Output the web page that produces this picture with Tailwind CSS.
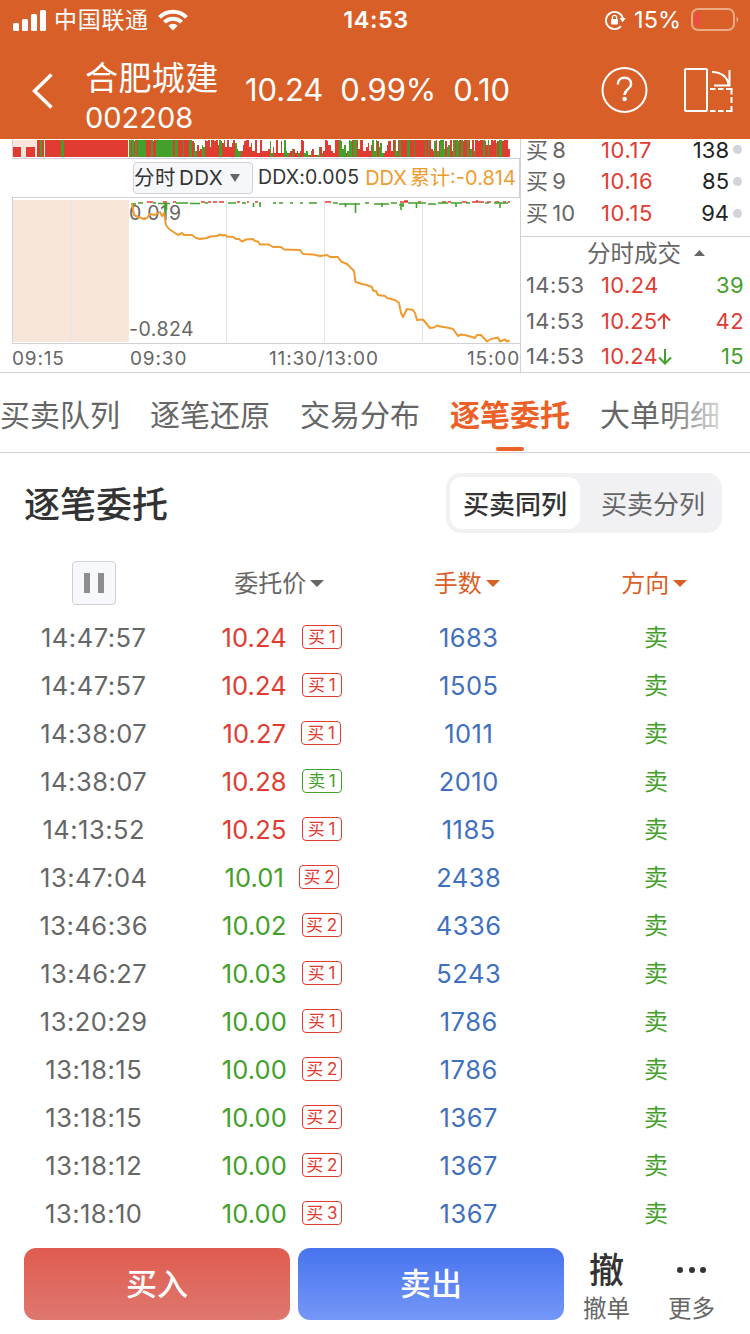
<!DOCTYPE html>
<html lang="zh-CN">
<head>
    <meta charset="UTF-8">
    <meta name="viewport" content="width=device-width, initial-scale=1.0">
    <title>合肥城建 002208 - 逐笔委托</title>
    <script src="https://cdn.jsdelivr.net/npm/@tailwindcss/browser@4"></script>
</head>
<body class="w-[750px] h-[1334px] overflow-hidden bg-white text-[#666] font-['Inter','Noto_Sans_CJK_SC',sans-serif]">

    <!-- Header -->
    <header class="h-[139px] bg-[#d86028] text-white">
        <!-- Status bar -->
        <div class="h-10 grid grid-cols-3 items-center pl-[13px] pr-[11px]">
            <div class="flex items-center">
                <svg class="w-[33px] h-[21px]" viewBox="0 0 33 21" fill="currentColor">
                    <rect x="0" y="13" width="6" height="8" rx="1.5"/>
                    <rect x="9" y="9" width="6" height="12" rx="1.5"/>
                    <rect x="18" y="4" width="6" height="17" rx="1.5"/>
                    <rect x="27" y="0" width="6" height="21" rx="1.5"/>
                </svg>
                <span class="ml-2 text-[23px] leading-10 tracking-[0.7px] whitespace-nowrap">中国联通</span>
                <svg class="ml-[9px] w-[30px] h-[22px]" viewBox="0 0 30 22" fill="none" stroke="currentColor" stroke-width="4">
                    <path d="M1.500 8.300a19 19 0 0 1 27 0"/>
                    <path d="M6.400 13.200a12.200 12.200 0 0 1 17.200 0"/>
                    <path d="M15 21.500l-4.700-4.700a6.600 6.600 0 0 1 9.400 0z" fill="currentColor" stroke="none"/>
                </svg>
            </div>
            <div class="text-center text-[23.5px] leading-10 font-semibold tracking-[0.5px]">14:53</div>
            <div class="flex items-center justify-end">
                <svg class="w-[21px] h-5" viewBox="0 0 21 20" fill="none" stroke="currentColor" stroke-width="1.8">
                    <path d="M16 16.200A8.600 8.600 0 1 1 17.800 8"/>
                    <path d="M14.400 8h6.400l-3.200 4.300z" fill="currentColor" stroke="none"/>
                    <rect x="6" y="9" width="7" height="5.600" rx="0.800" fill="currentColor" stroke="none"/>
                    <path d="M7.400 9V7.400a2.100 2.100 0 0 1 4.200 0V9" stroke-width="1.300"/>
                </svg>
                <span class="ml-2 text-[23.5px] leading-10">15%</span>
                <svg class="ml-[10px] w-12 h-6" viewBox="0 0 48 24" fill="none">
                    <rect x="1" y="1" width="42" height="21" rx="6" stroke="#eba984" stroke-width="2"/>
                    <rect x="4" y="5" width="5" height="13" rx="2.500" fill="#ee4b45"/>
                    <path d="M45.500 8.500v6a3.500 3.500 0 0 0 0-6z" fill="#eba984"/>
                </svg>
            </div>
        </div>
        <!-- Stock title -->
        <div class="h-[99px] flex items-center pl-8 pr-[17px]">
            <svg class="w-[21px] h-9 mt-0.5" viewBox="0 0 21 36" fill="none" stroke="currentColor" stroke-width="3.6">
                <path d="M19.500 1.500L2.500 18l17 16.500"/>
            </svg>
            <div class="ml-8 w-[160px] pt-[15px]">
                <div class="text-[33px] leading-[40px] tracking-[0.4px]">合肥城建</div>
                <div class="text-[29px] leading-[39px]">002208</div>
            </div>
            <div class="flex gap-[17px] text-[31px] leading-10 tracking-[-0.1px] whitespace-nowrap">
                <span>10.24</span><span>0.99%</span><span>0.10</span>
            </div>
            <svg class="ml-auto w-[47px] h-[47px]" viewBox="0 0 47 47" fill="none" stroke="currentColor">
                <circle cx="23.500" cy="24" r="22" stroke-width="2"/>
                <path d="M16.800 18.500c0-4 2.700-6.700 6.700-6.700s6.600 2.500 6.600 6.100c0 5.200-6.500 5.300-6.500 11" stroke-width="2.500"/>
                <circle cx="23.600" cy="33" r="2.200" fill="currentColor" stroke="none"/>
            </svg>
            <svg class="ml-9 w-[49px] h-11" viewBox="0 0 49 44" fill="none" stroke="currentColor" stroke-width="2">
                <rect x="1" y="1" width="22" height="42" rx="1"/>
                <path d="M28 4c9 0 16.500 5 16.500 14M45.500 2v15.500H30"/>
                <path d="M26 21h5.500M34 21h5.500M42 21h5.500v5.500M47.500 29v6M47.500 38v5h-5.500M39.500 43H34M31.500 43H26"/>
            </svg>
        </div>
    </header>

    <!-- Chart and quotes -->
    <section class="h-[234px] flex border-b border-[#d0d0d6]">
        <div class="w-[521px] border-r border-[#d0d0d6]">
            <svg class="block w-[520px] h-[19px]" viewBox="0 0 520 19" shape-rendering="crispEdges">
                <rect x="12" y="1" width="117" height="17" fill="#f8e6db"/>
                <path d="M12.500 0v18" stroke="#d0d0d6"/>
                <g id="volume"></g>
            </svg>
            <div class="ml-3 h-10 border-y border-r border-[#d0d0d6] flex items-center text-[20px] whitespace-nowrap">
                <div class="ml-[121px] w-[120px] h-8 flex shrink-0 items-center rounded border border-[#d0d0d6] bg-[#f6f7fb] text-[#333] leading-[30px]">
                    <span class="text-[20.5px] tracking-[0.4px] [word-spacing:-3px]">分时 DDX</span>
                    <svg class="ml-[7px] w-[10px] h-2" viewBox="0 0 10 8" fill="#666"><path d="M0 0h10L5 8z"/></svg>
                </div>
                <span class="ml-[5px] text-[#333] text-[19.5px] tracking-[0.15px]">DDX:0.005</span>
                <span class="ml-[6px] text-[#f09b30] text-[20px] [word-spacing:-2.5px]">DDX 累计:-0.814</span>
            </div>
            <div class="h-[145px]">
                <svg class="block w-[520px] h-[145px]" viewBox="0 198 520 145" fill="none">
                    <rect x="12" y="200" width="117" height="142" fill="#f8e6db"/>
                    <path d="M70.500 200v142M226.500 200v142M324.500 200v142M422.500 200v142" stroke="#e0e2ec"/>
                    <path d="M12.500 198v144" stroke="#d0d0d6"/>
                    <text x="129" y="220" font-size="19.500" letter-spacing="0.700" fill="#666">0.019</text>
                    <text x="129" y="336" font-size="19.500" letter-spacing="0.500" fill="#666">-0.824</text>
                    <path stroke="#e03c32" stroke-width="1.500" d="M147 202h6M163 202h4M173 202h3M201 202h4M208 202h3M213 202h4M219 202h5M237 202h3M247 202h2M255 202h3M325 202h6M400 202h8M404 201h4M418 202h3M442 202h4M448 202h3M462 202h5M472 202h12M476 201h2M487 202h4M495 202h4M503 202h3M508 202h2"/>
                    <path stroke="#43a02a" stroke-width="1.500" d="M131 204h5M138 203h5M153 203h3M158 203.500h12M176 203h12M190 203.500h10M205 203h3M228 203h8M242 203h4M259 203h2M273 203h3M279 203h4M290 203h3M300 203h3M309 203h8M333 203h5M339 204h21M365 203h4M374 204h15M391 203h6M399 205h4M408 203h18M428 204h8M438 203h10M451 203h11M466 203h4M485 203h4M494 203h14"/>
                    <path stroke="#43a02a" stroke-width="1.600" d="M133 203v9M165 203v14M166.500 203v7M253.500 203v4M260 203v4M345.500 203v4M355.500 203v10M382 203v4M401 203v7M403 203v4M416.500 203v5M456 203v4M500 203v5"/>
                    <polyline stroke="#f09b30" stroke-width="2" stroke-linejoin="round" points="132,203 134,215 138,217 144,219 147,218 150,214 155,215 160,212 162,216 164,213 166,225 169,229 172,231 178,235 182,233 184,235 192,235 196,238 200,239 207,238 210,236.500 217,236 220,234.500 223,235.500 225,235 227,236.500 233,237 236,239 239,239 242,241.500 246,239.500 253,239 255,241 258,241.500 260,244.500 269,244.500 273,247 281,247 284,249.500 300,250 303,254 313,254.500 320,256 327,255 330,257 338,257 341,261.500 347,264 354,271 355.500,282 362,284 367,285 372,287 373,290.500 376,291 378,295 385,296 387,298 395,300 399,303 401,313 403,317 407,309 413,310 415,313 417,320 423,319.500 430,328 434,327.500 437,325.500 440,326.500 447,327.500 453,329 458,336 461,334.500 467,335.500 475,338 477,335 481,335 487,341.500 491,339 498,337.500 500,341.500 505,339.500 507,341.500 509.500,340.500"/>
                </svg>
            </div>
            <div class="ml-3 h-[29px] border-t border-[#d0d0d6] grid grid-cols-[117px_140px_1fr_auto] text-[19px] leading-[29px] tracking-[0.85px]">
                <span>09:15</span><span class="pl-px">09:30</span><span>11:30/13:00</span><span>15:00</span>
            </div>
        </div>

        <!-- Bid levels and trades -->
        <div class="flex-1">
            <div class="h-[98px] border-b border-[#d0d0d6] text-[22px] leading-8 [word-spacing:-2px]">
                <div class="h-[26px] grid grid-cols-[75px_1fr_auto_13px] pl-[5px] pr-2 items-start leading-[22px]">
                    <span>买 8</span><span class="text-[#e03c32] tracking-[0.6px]">10.17</span><span class="text-[#222]">138</span><i class="ml-1 mt-[6px] size-[9px] rounded-full bg-[#d3d4da]"></i>
                </div>
                <div class="grid grid-cols-[75px_1fr_auto_13px] pl-[5px] pr-2 items-center">
                    <span>买 9</span><span class="text-[#e03c32] tracking-[0.6px]">10.16</span><span class="text-[#222]">85</span><i class="ml-1 size-[9px] rounded-full bg-[#d3d4da]"></i>
                </div>
                <div class="grid grid-cols-[75px_1fr_auto_13px] pl-[5px] pr-2 items-center">
                    <span>买 10</span><span class="text-[#e03c32] tracking-[0.6px]">10.15</span><span class="text-[#222]">94</span><i class="ml-1 size-[9px] rounded-full bg-[#d3d4da]"></i>
                </div>
            </div>
            <div class="h-[31px] flex items-center pl-[66px] text-[23.5px] leading-[31px]">
                <span class="pt-px">分时成交</span>
                <svg class="ml-[13px] w-[11px] h-[6px]" viewBox="0 0 11 6" fill="#666"><path d="M5.500 0L11 6H0z"/></svg>
            </div>
            <div class="text-[22px] leading-[35.5px] tracking-[0.4px]">
                <div class="grid grid-cols-[75px_1fr_auto] pl-[5px] pr-[6px]">
                    <span>14:53</span><span class="text-[#e03c32]">10.24</span><span class="text-[#43a02a]">39</span>
                </div>
                <div class="grid grid-cols-[75px_1fr_auto] pl-[5px] pr-[6px]">
                    <span>14:53</span>
                    <span class="flex items-center tracking-[0.2px] text-[#e03c32]">10.25<svg class="w-[14px] h-4" viewBox="0 0 14 16" fill="none" stroke="currentColor" stroke-width="2"><path d="M7 16V1.500M1 7.500l6-6 6 6"/></svg></span>
                    <span class="text-[#e03c32]">42</span>
                </div>
                <div class="grid grid-cols-[75px_1fr_auto] pl-[5px] pr-[6px]">
                    <span>14:53</span>
                    <span class="flex items-center tracking-[0.2px] text-[#e03c32]">10.24<svg class="w-[14px] h-4" viewBox="0 0 14 16" fill="none" stroke="#43a02a" stroke-width="2"><path d="M7 0v14.500M1 8.500l6 6 6-6"/></svg></span>
                    <span class="text-[#43a02a]">15</span>
                </div>
            </div>
        </div>
    </section>

    <!-- Tabs -->
    <nav class="relative h-20 flex gap-[30px] border-b border-[#d0d0d0] text-[30px] leading-[84px] whitespace-nowrap overflow-hidden">
        <span>买卖队列</span>
        <span>逐笔还原</span>
        <span>交易分布</span>
        <span class="relative font-bold text-[#ec6127]">逐笔委托<i class="absolute left-[46px] top-[74px] w-7 h-1 rounded-full bg-[#ec6127]"></i></span>
        <span>大单明细</span>
        <div class="absolute right-0 top-0 w-[90px] h-[79px] bg-linear-to-r from-white/0 to-white to-90%"></div>
    </nav>

    <!-- Section title -->
    <div class="h-[100px] flex items-center justify-between pl-6 pr-7">
        <h2 class="pt-[3px] text-[36px] leading-[50px] font-medium text-[#333]">逐笔委托</h2>
        <div class="w-[276px] h-[60px] p-1 flex rounded-[15px] bg-[#f1f1f4] text-[26px] leading-[55px] text-center">
            <span class="w-[130px] h-[52px] rounded-xl bg-white font-medium text-[#333]">买卖同列</span>
            <span class="flex-1 pl-2">买卖分列</span>
        </div>
    </div>

    <!-- Orders -->
    <div class="h-[60px] grid grid-cols-4 text-[24px] leading-[60px]">
        <div class="flex items-center justify-center">
            <div class="w-11 h-11 flex items-center justify-center gap-2 rounded border border-[#d0d0d6] bg-[#f7f8fb]">
                <i class="w-[6px] h-5 bg-[#8e8e92]"></i><i class="w-[6px] h-5 bg-[#8e8e92]"></i>
            </div>
        </div>
        <div class="flex items-center justify-center gap-1 pr-1"><span class="h-[60px] leading-[61px]">委托价</span><svg class="w-[14px] h-[7px]" viewBox="0 0 14 7" fill="currentColor"><path d="M0 0h14L7 7z"/></svg></div>
        <div class="flex items-center justify-center gap-1 pr-1 text-[#d86028]"><span class="h-[60px] leading-[61px]">手数</span><svg class="w-[14px] h-[7px]" viewBox="0 0 14 7" fill="currentColor"><path d="M0 0h14L7 7z"/></svg></div>
        <div class="flex items-center justify-center gap-1 pr-1 text-[#d86028]"><span class="h-[60px] leading-[61px]">方向</span><svg class="w-[14px] h-[7px]" viewBox="0 0 14 7" fill="currentColor"><path d="M0 0h14L7 7z"/></svg></div>
    </div>
    <div id="orders" class="text-[25.5px] leading-[49px] tracking-[0.5px] text-center"></div>

    <!-- Bottom bar -->
    <footer class="mt-[11px] h-[72px] flex pl-6">
        <button class="w-[266px] rounded-xl bg-linear-to-b from-[#e05b4f] to-[#de776f] text-white text-[31px] font-medium">买入</button>
        <button class="ml-2 w-[266px] rounded-xl bg-linear-to-b from-[#4873ee] to-[#7497f8] text-white text-[31px] font-medium">卖出</button>
        <div class="w-[85px] flex flex-col items-center">
            <span class="h-[43px] shrink-0 text-[35px] leading-[44px] font-medium text-[#333]">撤</span>
            <span class="text-[23.5px] leading-[36px]">撤单</span>
        </div>
        <div class="w-[85px] flex flex-col items-center">
            <span class="h-[43px] shrink-0 flex items-center gap-[5.5px]">
                <i class="size-[6px] rounded-full bg-[#333]"></i><i class="size-[6px] rounded-full bg-[#333]"></i><i class="size-[6px] rounded-full bg-[#333]"></i>
            </span>
            <span class="text-[23.5px] leading-[36px]">更多</span>
        </div>
    </footer>

    <script>
        const RED = "text-[#e03c32]";
        const GREEN = "text-[#43a02a]";

        const orders = [
            ["14:47:57", "10.24", "买 1", "1683"],
            ["14:47:57", "10.24", "买 1", "1505"],
            ["14:38:07", "10.27", "买 1", "1011"],
            ["14:38:07", "10.28", "卖 1", "2010"],
            ["14:13:52", "10.25", "买 1", "1185"],
            ["13:47:04", "10.01", "买 2", "2438"],
            ["13:46:36", "10.02", "买 2", "4336"],
            ["13:46:27", "10.03", "买 1", "5243"],
            ["13:20:29", "10.00", "买 1", "1786"],
            ["13:18:15", "10.00", "买 2", "1786"],
            ["13:18:15", "10.00", "买 2", "1367"],
            ["13:18:12", "10.00", "买 2", "1367"],
            ["13:18:10", "10.00", "买 3", "1367"]
        ];

        // previous close is 10.14
        document.getElementById("orders").innerHTML = orders.map(([time, price, level, lots]) => `
            <div class="h-12 grid grid-cols-4">
                <span>${time}</span>
                <span class="h-12 pl-px flex items-center justify-center gap-[15px] tracking-[0.1px] ${price > 10.14 ? RED : GREEN}">${price}
                    <b class="w-10 h-6 rounded border-[1.5px] border-current text-[17px] leading-[22px] tracking-normal [word-spacing:-1px] font-normal ${level[0] === "买" ? RED : GREEN}">${level}</b>
                </span>
                <span class="text-[#3f70bf]">${lots}</span>
                <span class="text-[24px] ${GREEN}">卖</span>
            </div>`).join("");

        // volume bars: colour letter + height in 2px steps
        const volume =
            "g9r9g9r8g9r9g9g9g9g9g9r9r9r9g9r8r9g9g9g9g9g9g9g9g9g9g9g9r9g9g9r9r9r9g9r9r9r9g9g9r8g7g3" +
            "r6r3r4g6g5r9r8r9r5r9r9r8r9r6g9g8r7r9r5r9r5r5r7r9g7g4g3g3r3r6r8r9" +
            "r9r5r7r3r3r9r2r2r9r3r3r3r3r4g8g2r5r2r9r2r2r8r2g9g3g2r2r3g4r4r2r3g2r3r9r8g2g3" +
            "g1r1g3r4r1r1g1g5r5g2r3r9r8r6r6r3r2r9r9r9g9g8g4g6r2g3g9g8r9g9g9r9r4r9r9" +
            "r3r3r5r7r3r6g9g3g9r8g5g7g2r2r3r6r8r8r3r9g9g3r9g9r9r9r9r9g9g9r9r9g9r9r9r9r9r9r9" +
            "g9r9g9r9r4r3g8r9g3r8g9g9g4r8g5g6r9r3g9r9g9g8r9g9r8r9r9g9r9g4r9g3r9" +
            "r9r8r9r9g9r8r6g9r6r9r8r9g7r8g9g9r8r9r9r9r4";
        const bar = (x, w, h, c) => `<rect x="${x}" y="${18 - h}" width="${w}" height="${h}" fill="${c === "g" ? "#43a02a" : "#e03c32"}"/>`;
        const items = volume.match(/../g);
        const step = 381 / items.length;
        let bars = bar(13, 8, 10, "r") + bar(26, 9, 10, "r") + bar(37, 7, 17, "r") + bar(40, 2, 17, "g")
            + bar(45, 83, 17, "r") + bar(61, 3, 17, "g");
        items.forEach((item, i) => {
            bars += bar(129 + i * step, step, Math.min(17, item[1] * 2), item[0]);
        });
        document.getElementById("volume").innerHTML = bars;
    </script>
</body>
</html>
